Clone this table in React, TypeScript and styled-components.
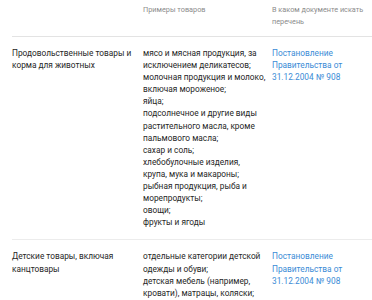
import styled, { createGlobalStyle } from "styled-components";

const GlobalStyle = createGlobalStyle`
	html, body {
		margin: 0;
		padding: 0;
		background: #fff;
	}
	body {
		font-family: Roboto, "Liberation Sans", Arial, sans-serif;
		-webkit-font-smoothing: antialiased;
	}
`;

interface Row {
	category: string;
	goods: string[];
	doc: string;
}

const rows: Row[] = [
	{
		category: "Продовольственные товары и корма для животных",
		goods: [
			"мясо и мясная продукция, за исключением деликатесов;",
			"молочная продукция и молоко, включая мороженое;",
			"яйца;",
			"подсолнечное и другие виды растительного масла, кроме пальмового масла;",
			"сахар и соль;",
			"хлебобулочные изделия,\nкрупа, мука и макароны;",
			"рыбная продукция, рыба и морепродукты;",
			"овощи;",
			"фрукты и ягоды",
		],
		doc: "Постановление Правительства от 31.12.2004 № 908",
	},
	{
		category: "Детские товары, включая канцтовары",
		goods: [
			"отдельные категории детской одежды и обуви;",
			"детская мебель (например, кровати), матрацы, коляски;",
			"тетради, дневники, альбомы для рисования;",
		],
		doc: "Постановление Правительства от 31.12.2004 № 908",
	},
];

function App() {
	return (
		<>
			<GlobalStyle />
			<Table>
				<HeadRow>
					<HeadCell />
					<HeadCell>Примеры товаров</HeadCell>
					<HeadCell>
						В каком документе искать
						<br />
						перечень
					</HeadCell>
				</HeadRow>
				{rows.map((row, idx) => (
					<BodyRow key={idx} last={idx === rows.length - 1}>
						<Cell>{row.category}</Cell>
						<Cell>
							{row.goods.map((g, i) => (
								<Line key={i}>{g}</Line>
							))}
						</Cell>
						<Cell>
							<DocLink href="#">{row.doc}</DocLink>
						</Cell>
					</BodyRow>
				))}
			</Table>
		</>
	);
}

export default App;

const Table = styled.div`
	padding-left: 12px;
	width: 360px;
`;

const HeadRow = styled.div`
	display: grid;
	grid-template-columns: 131px 129px 1fr;
	padding: 4px 0 9px;
	border-bottom: 1px solid #e3e3e3;
`;

const HeadCell = styled.div`
	font-size: 7.3px;
	line-height: 11.5px;
	color: #8c8c8c;
	white-space: nowrap;
`;

const BodyRow = styled.div<{ last?: boolean }>`
	display: grid;
	grid-template-columns: 131px 129px 1fr;
	padding: 10px 0 11px;
	border-bottom: ${({ last }) => (last ? "none" : "1px solid #ececec")};
`;

const Cell = styled.div`
	font-size: 8.3px;
	line-height: 12.1px;
	color: #262626;
	padding-right: 6px;
`;

const Line = styled.div`
	white-space: pre-line;
`;

const DocLink = styled.a`
	color: #3a8bd6;
	text-decoration: none;
`;
